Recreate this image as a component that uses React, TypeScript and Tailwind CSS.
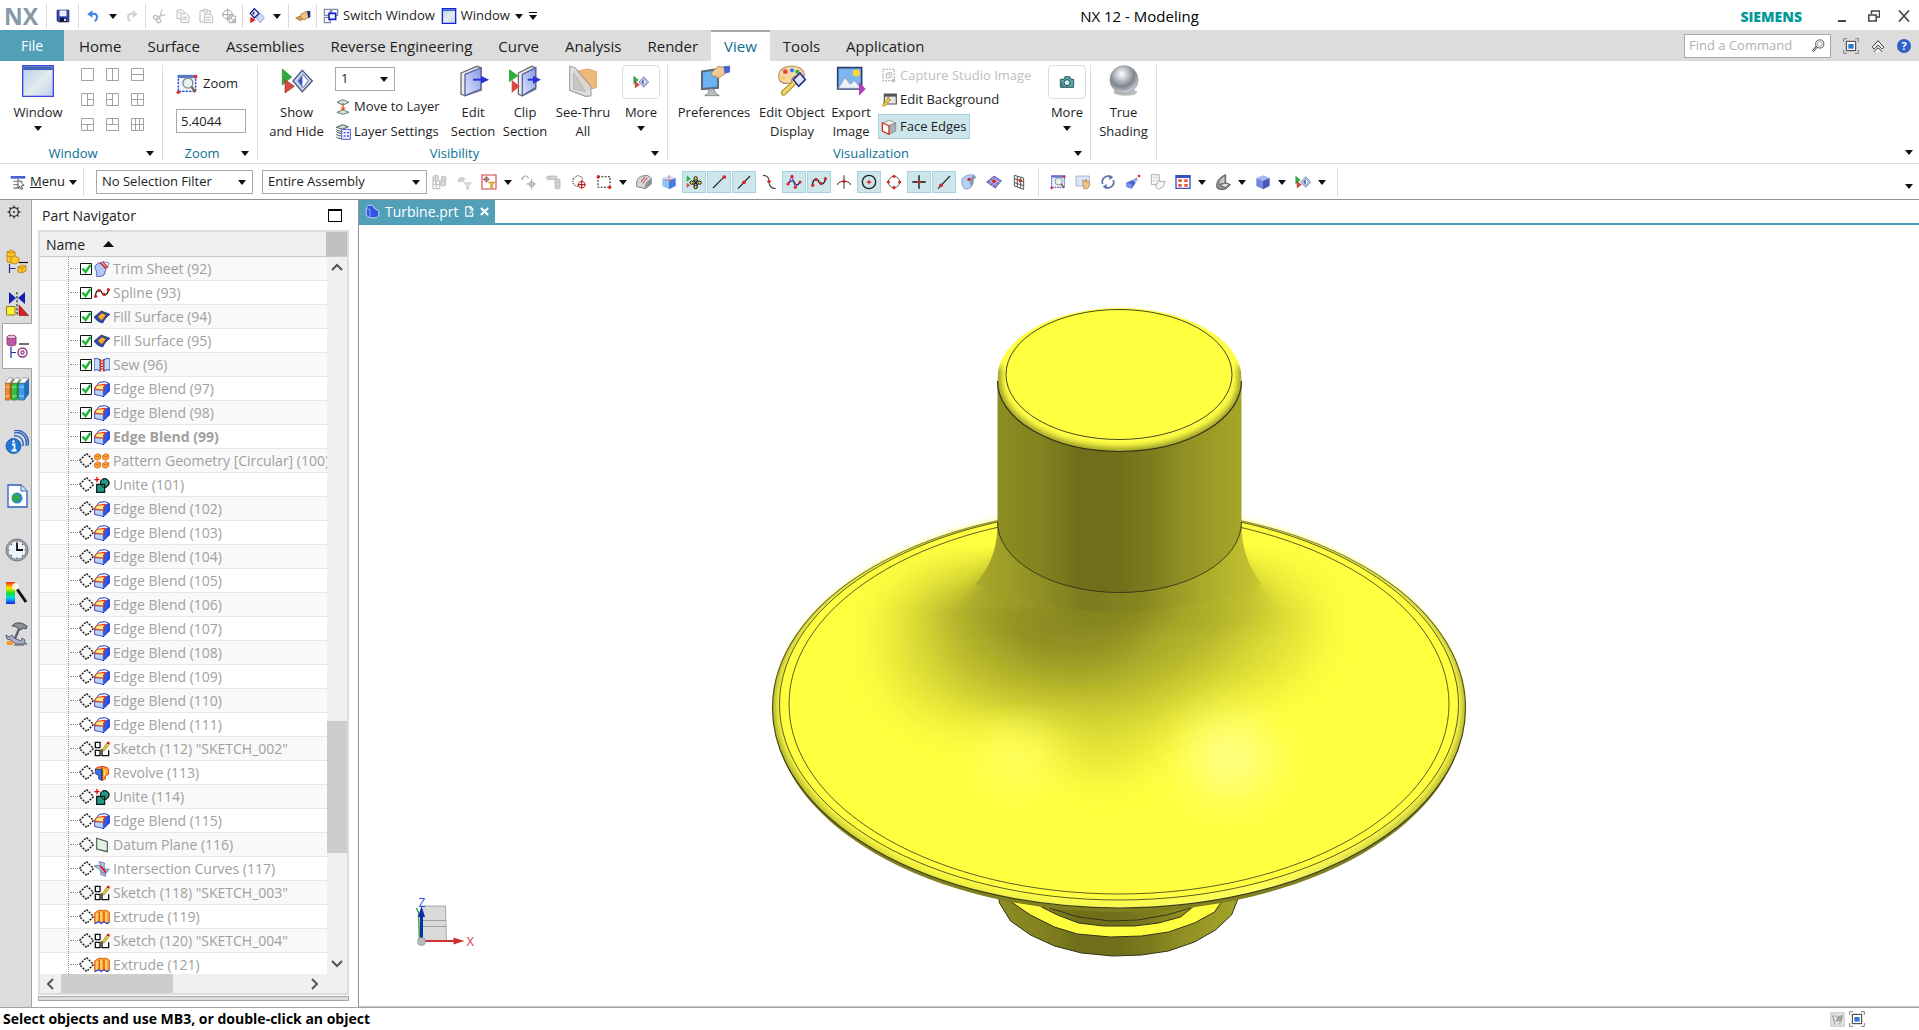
import { useState, type ReactNode } from 'react';

// All glyphs are drawn on a 24 x 24 grid
const glyphs: Record<string, ReactNode> = {
  save: (
    <>
      <path d="M2 2h20v20H4l-2-2z" fill="#3348b8" stroke="#15205c" strokeWidth="1.5" />
      <path d="M6 2.500h12v10H6z" fill="#e8eefc" />
      <path d="M7 15h11v7H7z" fill="#11152a" />
      <path d="M14 16.500h3v4h-3z" fill="#fff" />
    </>
  ),
  undo: (
    <>
      <path d="M15 21c5-4 6-13-2-13H8" fill="none" stroke="#3b84e0" strokeWidth="3.500" />
      <path d="M2 9l9-7v13z" fill="#3b84e0" />
    </>
  ),
  redo: (
    <>
      <path d="M9 21c-5-4-6-13 2-13h5" fill="none" stroke="#d2d2d2" strokeWidth="3.500" />
      <path d="M22 9l-9-7v13z" fill="#d2d2d2" />
    </>
  ),
  cut: (
    <g fill="none" stroke="#bdbdbd" strokeWidth="1.800">
      <path d="M15 2l-4 14M20 10L9 13" />
      <circle cx="5" cy="14" r="3" />
      <circle cx="10" cy="19" r="3" />
    </g>
  ),
  copy: (
    <g fill="#fafafa" stroke="#bdbdbd" strokeWidth="1.500">
      <path d="M3 3h8l3 3v10H3z" />
      <path d="M9 8h8l4 4v10H9z" />
      <path d="M11 14h7M11 17h7M5 7h4" />
    </g>
  ),
  paste: (
    <g fill="#fafafa" stroke="#bdbdbd" strokeWidth="1.500">
      <path d="M3 4h16v17H3z" />
      <path d="M8 2h6v4H8z" />
      <path d="M10 9h8l4 4v9H10z" />
      <path d="M12 14h7M12 18h7" />
    </g>
  ),
  target: (
    <g fill="none" stroke="#a8a8a8" strokeWidth="1.500">
      <circle cx="10" cy="10" r="7" />
      <path d="M10 1v18M1 10h18M12 12h10v10H12zM14 14l6 6m0-4v4h-4" />
    </g>
  ),
  hideShow: (
    <>
      <path d="M8 1l7 7-7 7-6-7z" fill="#eef" stroke="#1c2280" strokeWidth="2" />
      <path d="M8 4v7l-3-3z" fill="#1c2280" />
      <path d="M17 8l6 7-6 7-6-7z" fill="#cfdcf8" stroke="#8ea6dd" strokeWidth="1.500" />
      <path d="M2 13l8 5-8 5z" fill="#d8251f" />
    </>
  ),
  touch: (
    <>
      <path d="M1 15l9-4 4 4-6 4z" fill="#d49a52" stroke="#94602a" />
      <path d="M9 9l8-4 5 8-8 5-6-4z" fill="#f0c27e" stroke="#9a6a2c" />
      <path d="M18 4l5 1v9l-3 1z" fill="#1d2c78" />
    </>
  ),
  switchWin: (
    <g fill="#f4f7fd" strokeWidth="1.800">
      <path d="M2 2h9v9H2zM13 2h9v9h-9zM2 14h9v8H2z" stroke="#7d8aa6" />
      <path d="M9 8h10v9H9z" stroke="#1522d8" strokeWidth="2.400" />
    </g>
  ),
  windowPane: (
    <>
      <path d="M2 1h20v22H2z" fill="url(#paneFill)" stroke="#1522d8" strokeWidth="2" />
      <path d="M3 2h18v2.500H3z" fill="#3c5fc0" />
    </>
  ),
  bigWindow: (
    <>
      <path d="M.5.500h23v23H.5z" fill="url(#paneFill)" stroke="#3d46e0" />
      <path d="M1 1h22v2.800H1z" fill="#4463b8" />
    </>
  ),
  zoomBox: (
    <>
      <path d="M2.500 3h19v17h-19z" fill="#eef3fb" stroke="#1e3be0" strokeDasharray="2.500 1.200" strokeWidth="1.400" />
      <path d="M2 2h20v3.500H2z" fill="#5b77c8" />
      <circle cx="13" cy="11" r="5.500" fill="#e6f0ef" stroke="#7e8a90" strokeWidth="1.400" />
      <path d="M17 15l4 6" stroke="#8a6a30" strokeWidth="2.500" />
      <circle cx="2.500" cy="21" r="2" fill="#e03030" />
      <circle cx="21.500" cy="4" r="2" fill="#e03030" />
    </>
  ),
  showHide: (
    <>
      <path d="M1 3l7 6-7 6z" fill="#2fae3c" stroke="#1c7c28" strokeWidth=".5" />
      <path d="M3 11l7 5-7 5z" fill="#d84a40" stroke="#9c2a22" strokeWidth=".5" />
      <path d="M16 4l7.500 8-7.500 8-7-8z" fill="#c9d2ee" stroke="#4c5a84" strokeWidth="1" />
      <path d="M16.500 7l4 5-4 5-4-5z" fill="#f5f7fd" stroke="#5a6690" strokeWidth=".7" />
      <path d="M16 8v8l-3-4z" fill="#3b4cc8" />
    </>
  ),
  moveLayer: (
    <>
      <path d="M3 5l9-4 9 4-9 4z" fill="#cfe6da" stroke="#55655e" strokeWidth="1.300" />
      <path d="M3 20l9-4 9 4-9 3z" fill="#cfe6da" stroke="#55655e" strokeWidth="1.300" />
      <path d="M12 6v9" stroke="#e35a1c" strokeWidth="2" />
      <path d="M8 13l4 5 4-5z" fill="#e35a1c" />
    </>
  ),
  layerSettings: (
    <>
      <path d="M2 5l9-4 9 3-9 4zM2 11c0 2 5 3 8 3M2 15c0 2 5 3 8 3M2 19c0 2 5 3 8 3M2 8c0 2 5 3 8 3" fill="#bfe0cf" stroke="#4f5f58" strokeWidth="1.500" />
      <path d="M10 8h13v15H10z" fill="#eef0ff" stroke="#4c55d8" strokeWidth="1.500" />
      <path d="M13 13h3M13 18h3M18 13h3M18 18h3" stroke="#4c55d8" strokeWidth="2" />
    </>
  ),
  editSection: (
    <>
      <path d="M3 6l12-5 3 1v17L6 23l-3-1z" fill="#ececec" stroke="#6f6f6f" strokeWidth="1" />
      <path d="M6 7l12-5v16L6 23z" fill="url(#sectionFill)" stroke="#5a64a0" strokeWidth="1" />
      <path d="M12 11h7" stroke="#2a35d8" strokeWidth="1.500" />
      <path d="M18 8l6 3-6 3z" fill="#2a35d8" />
    </>
  ),
  clipSection: (
    <>
      <path d="M7 6l10-5 3 1v16L10 23l-3-1z" fill="#ececec" stroke="#6f6f6f" strokeWidth="1" />
      <path d="M10 7l10-5v15l-10 6z" fill="url(#sectionFill)" stroke="#5a64a0" strokeWidth="1" />
      <path d="M0 3l7 5-7 5z" fill="#2fae3c" />
      <path d="M2 11l6 5-6 5z" fill="#d84a40" />
      <path d="M14 11h5" stroke="#2a35d8" strokeWidth="1.500" />
      <path d="M18 8l6 3-6 3z" fill="#2a35d8" />
    </>
  ),
  seeThru: (
    <>
      <path d="M5 5l11-2 6 2v12l-8 2-9-5z" fill="#f0b878" stroke="#d09a60" strokeWidth=".6" />
      <path d="M2 1l4 1 12 14v7l-4 .500L2 19z" fill="#d9d9d9" fillOpacity=".85" stroke="#9d9d9d" strokeWidth=".8" />
      <path d="M5 6v12l9 2z" fill="#c6c6c6" stroke="#aaa" strokeWidth=".5" />
    </>
  ),
  preferences: (
    <>
      <path d="M3 5l12-2v14L3 18z" fill="#6ab4f6" stroke="#5c6c7c" strokeWidth="1.600" />
      <path d="M8 18h4l1 3 3 2H5l3-2z" fill="#b9bdbf" stroke="#7a8084" strokeWidth=".6" />
      <path d="M10 6l5-5 6 1v4l-6 4-2-2-2 1z" fill="#f0c896" stroke="#b98a52" strokeWidth=".7" />
      <path d="M19 1l5-.5v5l-4 1z" fill="#4a62d8" />
    </>
  ),
  objectDisplay: (
    <>
      <path d="M2 8c0-5 6-8 12-7s8 5 7 8-5 1-7 3-8 3-11 0c-1-1-1-2-1-4z" fill="#f4d9ae" stroke="#b88c58" strokeWidth=".8" />
      <circle cx="7" cy="5" r="1.800" fill="#e8452c" />
      <circle cx="12" cy="4" r="1.600" fill="#2f86d8" />
      <circle cx="16" cy="5" r="1.500" fill="#3aa648" />
      <circle cx="5.500" cy="9.500" r="1.500" fill="#f2d13a" />
      <path d="M16 13L7 22c-2 2-4-1-2-3l7-6c-1-3 1-5 4-5l-1 3 3 2z" fill="#f2d96a" stroke="#a88a2c" strokeWidth=".8" />
      <path d="M18 6l4 5-5 5-4-5z" fill="#dfe5fa" stroke="#24308c" strokeWidth="1.200" />
    </>
  ),
  exportImage: (
    <>
      <path d="M2 2h18v16H2z" fill="#7db5ee" stroke="#2c3d74" strokeWidth="1.200" />
      <circle cx="16" cy="6" r="2.600" fill="#ffd93a" />
      <path d="M2.500 17.500l5-8 4 5 3-3 5 6z" fill="#eef2f7" stroke="#8594ac" strokeWidth=".6" />
      <path d="M18 13l5 5-5 5z" fill="#b13cc0" />
    </>
  ),
  capture: (
    <g fill="none" stroke="#b9b9b9" strokeWidth="2">
      <path d="M3 2h17v17H3z" strokeDasharray="3 1.500" />
      <path d="M8 9l3-2h5v6l-3 2H8zM8 9h5v6" strokeWidth="1.500" />
      <path d="M17 15v8l5-4z" fill="#b9b9b9" stroke="none" />
    </g>
  ),
  editBackground: (
    <>
      <path d="M5 3h18v15H5z" fill="#e8e8e8" stroke="#555" strokeWidth="1.800" />
      <path d="M5 3h18v4H5z" fill="#555" />
      <path d="M14 12l-8 9c-2 2-5-1-3-3l6-5c-1-3 0-5 3-5v3l3 1z" fill="#f2d13a" stroke="#9a7a20" />
    </>
  ),
  faceEdges: (
    <>
      <path d="M2 6l11-4 9 4-10 4z" fill="#f2f2f2" stroke="#777" strokeWidth="1" />
      <path d="M12 10l10-4v12l-10 5z" fill="#aab0b8" stroke="#777" strokeWidth="1" />
      <path d="M2 6l10 4v13L2 18z" fill="#fff" stroke="#d8321f" strokeWidth="2" />
    </>
  ),
  camera: (
    <>
      <path d="M2 8h5l2-4h7l2 4h4v12H2z" fill="#5aa7a4" stroke="#2c5c62" strokeWidth="1.500" />
      <circle cx="12" cy="13" r="4.500" fill="#d6ecef" stroke="#264a50" strokeWidth="1.500" />
      <path d="M2 9v10l6 1z" fill="#3c7488" />
    </>
  ),
  sphere: (
    <>
      <ellipse cx="13" cy="20.500" rx="9" ry="2.500" fill="#bdbdbd" />
      <circle cx="12" cy="11" r="10.500" fill="url(#sphereFill)" stroke="#83898f" strokeWidth=".5" />
    </>
  ),
  menu: (
    <>
      <path d="M1 3h22v4H1z" fill="#4a5fd0" />
      <path d="M5 11h14M5 16h14M5 21h10" stroke="#8a8a8a" strokeWidth="2" />
      <path d="M12 8l9 9-4 .5 2 5-2 1-2.500-5L12 21z" fill="#fff" stroke="#333" strokeWidth="1.200" />
    </>
  ),
  grayTree: (
    <g fill="none" stroke="#c4c4c4" strokeWidth="1.800">
      <path d="M7 1v14M2 6h10M3 10h10v12H3zM3 16h10M8 10v12" />
      <circle cx="7" cy="6" r="4" />
      <circle cx="19" cy="7" r="3.500" fill="#d8d8d8" />
      <circle cx="18" cy="14" r="4" fill="#d8d8d8" />
    </g>
  ),
  grayFilter: (
    <>
      <path d="M3 9l3-4 7 1-1 5-8 1z" fill="#d0d0d0" stroke="#c4c4c4" />
      <path d="M12 13h11l-4 5v5h-3v-5z" fill="#dcdcdc" stroke="#c4c4c4" />
    </>
  ),
  redFilter: (
    <>
      <path d="M1.500 1.500h21v21h-21z" fill="#fff" stroke="#d03a3e" strokeWidth="1.600" />
      <circle cx="8" cy="8" r="3" fill="none" stroke="#555" strokeWidth="1.200" />
      <path d="M8 3v10M3 8h10" stroke="#b03030" strokeWidth="1.200" />
      <path d="M11 12h10l-3.500 4v5h-3v-5z" fill="#f2b53a" stroke="#b8811c" strokeWidth=".8" />
    </>
  ),
  grayMove: (
    <g fill="none" stroke="#a9a9a9" strokeWidth="1.600">
      <path d="M2 8c1-6 8-7 9-1M2 9l-1-4M16 7v16M8 15h15" />
      <circle cx="16" cy="15" r="3.500" />
    </g>
  ),
  grayShare: (
    <g fill="#d4d4d4" stroke="#b5b5b5" strokeWidth="1.200">
      <circle cx="4" cy="6" r="3" />
      <path d="M6 3h10v5H6zM13 8h8v14h-7z" />
      <path d="M14 13h7M14 18h7" />
    </g>
  ),
  dottedPoint: (
    <>
      <path d="M3 7l7-5 7 3v9l-8 5-6-4z" fill="none" stroke="#222" strokeDasharray="1.500 1.500" strokeWidth="1.500" />
      <circle cx="16" cy="16" r="5" fill="#fff" stroke="#d8251f" strokeWidth="1.500" />
      <path d="M16 10v12M10 16h12" stroke="#8a1410" strokeWidth="1.500" />
    </>
  ),
  rectSelect: (
    <>
      <path d="M3 4h18v16H3z" fill="none" stroke="#222" strokeDasharray="3 2" strokeWidth="1.600" />
      <circle cx="3.500" cy="4" r="2.500" fill="#d8251f" />
      <circle cx="20.500" cy="20" r="2.500" fill="#d8251f" />
    </>
  ),
  grayBlend: (
    <>
      <path d="M1 12c1-5 4-8 8-9l8-1 6 4v9l-9 7-13-3z" fill="#d4d8dc" stroke="#6c7076" strokeWidth="1.200" />
      <path d="M13 21c0-6 3-11 10-14v8l-9 7z" fill="#8e949c" />
      <path d="M8 12c1-4 3-6 6-7M11 14c1-4 3-6 6-8" fill="none" stroke="#d83a34" strokeWidth="1.500" />
    </>
  ),
  blueCube: (
    <>
      <path d="M2 6l10-4 10 4-10 4z" fill="#cfe2fa" />
      <path d="M2 6l10 4v13L2 18z" fill="#8fc4f2" />
      <path d="M12 10l10-4v12l-10 5z" fill="#4b78dd" />
      <path d="M12 2v8M6 8l6 2 5-2" stroke="#d8453c" strokeWidth="1" fill="none" />
    </>
  ),
  snapAll: (
    <>
      <path d="M1 2l6 5-6 5z" fill="#2fae3c" />
      <path d="M1 13l5 4-5 4z" fill="#d84a40" />
      <g fill="#f6dc3a" stroke="#111" strokeWidth="1.500">
        <circle cx="14.500" cy="6.500" r="2.500" />
        <circle cx="14.500" cy="19.500" r="2.500" />
        <circle cx="8.500" cy="13" r="2.500" />
        <circle cx="20.500" cy="13" r="2.500" />
      </g>
      <path d="M11 9l7 8m0-8l-7 8" stroke="#111" strokeWidth="1.800" />
    </>
  ),
  endPoint: (
    <>
      <path d="M3 21L20 4" stroke="#222" strokeWidth="1.700" />
      <circle cx="20" cy="4.500" r="2.800" fill="#d8251f" />
    </>
  ),
  midPoint: (
    <>
      <path d="M3 22L21 3" stroke="#222" strokeWidth="1.700" />
      <circle cx="12" cy="12.500" r="2.800" fill="#d8251f" />
    </>
  ),
  arcPoint: (
    <>
      <path d="M3 2c7 0 9 4 9 9s2 11 10 11" fill="none" stroke="#444" strokeWidth="1.700" />
      <circle cx="12" cy="11" r="2.500" fill="#d8251f" />
    </>
  ),
  polePoint: (
    <>
      <path d="M3 15L9 3l5 17 7-8" fill="none" stroke="#9a35c4" strokeWidth="1.600" />
      <path d="M3 15c5-6 8-6 10-2s4 5 8 0" fill="none" stroke="#223" strokeWidth="1.600" />
      <g fill="#d8251f">
        <circle cx="3" cy="15" r="2.300" />
        <circle cx="9" cy="3.500" r="2.300" />
        <circle cx="14" cy="20" r="2.300" />
        <circle cx="21" cy="12" r="2.300" />
      </g>
    </>
  ),
  spline: (
    <>
      <path d="M2 18C3 4 10 7 12 12s8 4 10-5" fill="none" stroke="#222" strokeWidth="2" />
      <g fill="#d8251f">
        <circle cx="2.500" cy="17" r="2.400" />
        <circle cx="8" cy="8.500" r="2.400" />
        <circle cx="15" cy="14" r="2.400" />
        <circle cx="21.500" cy="7" r="2.400" />
      </g>
    </>
  ),
  crossPoint: (
    <>
      <path d="M12 2v20M2 16c3-7 17-7 20 0" fill="none" stroke="#444" strokeWidth="1.600" />
      <circle cx="12" cy="11" r="2.600" fill="#d8251f" />
    </>
  ),
  arcCenter: (
    <>
      <circle cx="12" cy="12" r="10" fill="none" stroke="#222" strokeWidth="2" />
      <circle cx="12" cy="12" r="2.400" fill="#d8251f" />
      <path d="M12 8v8M8 12h8" stroke="#d8251f" strokeWidth="1" />
    </>
  ),
  quadrant: (
    <>
      <circle cx="12" cy="12" r="8.500" fill="none" stroke="#666" strokeWidth="1.500" />
      <g fill="#d8251f">
        <circle cx="12" cy="3.500" r="2.400" />
        <circle cx="12" cy="20.500" r="2.400" />
        <circle cx="3.500" cy="12" r="2.400" />
        <circle cx="20.500" cy="12" r="2.400" />
      </g>
    </>
  ),
  existing: (
    <>
      <path d="M12 2v20M2 12h20" stroke="#111" strokeWidth="2" />
      <circle cx="12" cy="12" r="2.400" fill="#d8251f" />
    </>
  ),
  onCurve: (
    <>
      <path d="M3 22L21 3" stroke="#222" strokeWidth="1.700" />
      <circle cx="7.500" cy="17" r="2.800" fill="#d8251f" />
    </>
  ),
  onFace: (
    <>
      <path d="M2 7c5-5 11-7 18-5-6 3-7 7-6 12l2 5c-4 3-8 4-11 3-3-5-5-10-3-15z" fill="#b5d2f5" stroke="#6f8fbd" strokeWidth="1.200" />
      <path d="M20 2l3 3c-3 2-5 5-4 9l-3 5c-4-7-3-13 4-17z" fill="#8797b0" />
      <circle cx="12" cy="8" r="2.500" fill="#d8251f" />
    </>
  ),
  facet: (
    <>
      <path d="M1 12L12 3l11 7-9 11z" fill="#7f7fd0" stroke="#4a4a86" strokeWidth="1.200" />
      <path d="M5 9l12 8M9 6l12 7M5 15l11-9M9 18l11-10" stroke="#d9d9f5" strokeWidth="1" />
      <circle cx="12" cy="11" r="2.600" fill="#d8251f" />
    </>
  ),
  gridPoint: (
    <>
      <path d="M5 2l14 4v17L5 18zM5 7l14 4.500M5 13l14 4.500M9.500 3.500v16M14.500 5v16.500" fill="none" stroke="#555" strokeWidth="1.500" />
      <circle cx="14" cy="10" r="2.400" fill="#d8251f" />
    </>
  ),
  panView: (
    <>
      <path d="M1.500 3h20v15h-20z" fill="#dbe6f6" stroke="#8b9cc0" />
      <path d="M12 14l-1-4 2-1 2 3 1-4 2 1v3l3-1 1 6-3 5h-6z" fill="#efc389" stroke="#ab7b3f" />
    </>
  ),
  rotateView: (
    <>
      <path d="M4 15A8.500 8.500 0 0116 4.500M20 9A8.500 8.500 0 018 19.500" fill="none" stroke="#5a72a6" strokeWidth="2.600" />
      <path d="M14 1l6 4-6 4zM10 15l-6 4 6 4z" fill="#5a72a6" />
    </>
  ),
  perspective: (
    <>
      <path d="M2 13l9-4 5 4-6 9-8-3z" fill="#4a5fd0" />
      <path d="M2 13l8 2v7l-8-3z" fill="#7d90ea" />
      <path d="M11 9l7-4 1 3-3 5z" fill="#93a3e8" />
      <circle cx="21" cy="3" r="2" fill="#d8251f" />
    </>
  ),
  grayView: (
    <g fill="#f5f5f5" stroke="#b0b0b0" strokeWidth="1.500">
      <path d="M2 1h12v15H2zM5 5h2M9 5h2M5 10h2M9 10h2" />
      <path d="M9 15l5-4h9l-3 8-7 4-4-3z" />
    </g>
  ),
  layoutRed: (
    <>
      <path d="M1.500 2.500h21v19h-21z" fill="#fff" stroke="#3a52c0" strokeWidth="2" />
      <path d="M1 2h22v4H1z" fill="#3a52c0" />
      <path d="M5 8h5v4H5zM14 8h5v4h-5zM5 15h5v4H5zM14 15h5v4h-5z" fill="#e8532c" />
    </>
  ),
  renderStyle: (
    <>
      <path d="M3 21C1 12 6 5 16 1v12l7 3-6 6c-5 2-10 2-14-1z" fill="#8f8f8f" stroke="#4c4c4c" strokeWidth="1.300" />
      <path d="M6 14c1-4 4-8 8-10v9z" fill="#c9c9c9" />
      <path d="M7 16l9-2 6 2-7 4z" fill="#e8e8e8" stroke="#4c4c4c" />
    </>
  ),
  solidCube: (
    <>
      <path d="M2 6l11-4 9 4-10 4z" fill="#a8b6f2" />
      <path d="M2 6l10 4v13L2 18z" fill="#7387e2" />
      <path d="M12 10l10-4v12l-10 5z" fill="#4a5ab8" />
    </>
  ),
  search: (
    <>
      <circle cx="15" cy="8.500" r="7" fill="#fff" stroke="#444" strokeWidth="1.500" />
      <circle cx="15" cy="8.500" r="4" fill="none" stroke="#666" strokeWidth="1" />
      <path d="M10 13l-7 8" stroke="#444" strokeWidth="4" />
      <path d="M10 13l-7 8" stroke="#fff" strokeWidth="1.500" />
    </>
  ),
  fullScreen: (
    <>
      <path d="M1 6V1h5M18 1h5v5M23 18v5h-5M6 23H1v-5" fill="none" stroke="#7d7d7d" strokeWidth="1.500" />
      <path d="M5 5h14v14H5z" fill="#fff" stroke="#333" strokeWidth="1.500" />
      <path d="M8 9h8v7H8z" fill="#2f78d0" />
    </>
  ),
  collapse: <path d="M2 14L12 3l10 11-3 3-7-7-7 7zm3 8l7-7 7 7" fill="#fff" stroke="#333" strokeWidth="1.700" />,
  flag: (
    <>
      <path d="M.5.500h23v23H.5z" fill="#dedede" stroke="#bcbcbc" />
      <path d="M4 6l4 14M20 5l-5 15" stroke="#999" strokeWidth="1.500" />
      <path d="M5 6l7 2 1 6-6-1z" fill="#eee" stroke="#999" />
      <path d="M19 6l-7 2-1 6 7-1z" fill="#aaa" stroke="#888" strokeDasharray="2 2" strokeWidth="2" />
    </>
  ),
  gear: (
    <>
      <circle cx="12" cy="12" r="7.500" fill="none" stroke="#333" strokeWidth="2.200" />
      <path d="M12 1v4M12 19v4M1 12h4M19 12h4M4.200 4.200l2.600 2.600M17.200 17.200l2.600 2.600M19.800 4.200l-2.600 2.600M6.800 17.200l-2.600 2.600" stroke="#333" strokeWidth="2.200" />
      <circle cx="12" cy="12" r="1.800" fill="#333" />
    </>
  ),
  assemblyNav: (
    <>
      <path d="M2 3l4-2 4 2v4l4 2v4l-4 2-4-1-4-1z" fill="#fbc62c" stroke="#b97e10" strokeWidth=".8" />
      <path d="M2 7l4 1 4-1M6 8v6M2 3l4 1 4-1" fill="none" stroke="#b97e10" strokeWidth=".8" />
      <path d="M14 13.500h9" stroke="#111" strokeWidth="1.200" />
      <path d="M4.500 15v9M4.500 19.500h6" stroke="#1c2a9c" strokeWidth="1.200" />
      <path d="M13 18l4-2 4 1v5l-4 2-4-1z" fill="#fbc62c" stroke="#b97e10" strokeWidth=".8" />
      <path d="M13 18l4 1 4-2M17 19v5" fill="none" stroke="#b97e10" strokeWidth=".8" />
    </>
  ),
  constraintNav: (
    <>
      <path d="M4 0l7 6-7 6zM20 0l-7 6 7 6z" fill="#1420b8" />
      <path d="M12 0v24" stroke="#111" strokeDasharray="2.500 1.500" />
      <path d="M1.500 14.500h8.500v8.500H1.500z" fill="#fbef3a" stroke="#8b8414" />
      <path d="M14 13v10.500h9.500z" fill="#d42020" stroke="#7c1010" strokeWidth=".6" />
    </>
  ),
  partNav: (
    <>
      <path d="M1 3v7c0 2.500 9 2.500 9 0V3z" fill="#c05aa4" stroke="#7c2c68" strokeWidth=".8" />
      <ellipse cx="5.500" cy="3" rx="4.500" ry="1.800" fill="#ecc4e0" stroke="#7c2c68" strokeWidth=".8" />
      <path d="M13 10h10" stroke="#111" strokeWidth="1.200" />
      <path d="M5 13v11M5 18.500h5" stroke="#1c2a9c" strokeWidth="1.200" />
      <circle cx="16.500" cy="18.500" r="4.500" fill="#fff" stroke="#8c3478" strokeWidth="1.400" />
      <circle cx="16.500" cy="18.500" r="1.600" fill="none" stroke="#8c3478" strokeWidth="1.200" />
    </>
  ),
  library: (
    <>
      <path d="M0 6l5-5h19v16l-5 6H0z" fill="#f2f2f2" />
      <path d="M0 6h5v17H0z" fill="#f08a2a" stroke="#9c5010" strokeWidth=".7" />
      <path d="M6.500 6h5.500v17H6.500z" fill="#35c046" stroke="#177326" strokeWidth=".7" />
      <path d="M5 6l4-5v5l-2.500 2v14H5z" fill="#a35a16" />
      <path d="M13.500 6h6v17h-6z" fill="#3a9be6" stroke="#175a96" strokeWidth=".7" />
      <path d="M12 6l4-4v4l-2.500 2v14H12z" fill="#1f8a30" />
      <path d="M19.500 6L24 1v16l-4.500 6z" fill="#1e6fb8" />
      <path d="M0 6l4-5h4L5 6zM6.500 6l4.500-5h4l-3 5zM13.500 6L18 1h6l-4.500 5z" fill="#fff" stroke="#777" strokeWidth=".6" />
      <path d="M0 10h5M0 19h5M7 10h5M7 19h5M14 10h5M14 19h5" stroke="#fff" strokeOpacity=".7" strokeWidth=".8" />
    </>
  ),
  info: (
    <>
      <path d="M9 6c6-1 10 4 9 10M9 3c8-2 14 5 12 13M9 .500c9-1.500 16 6 14 15" fill="none" stroke="#2f68c0" strokeWidth="1.500" />
      <circle cx="8.500" cy="16" r="7.500" fill="#1f78d8" stroke="#134d94" strokeWidth=".8" />
      <path d="M7 14.500h2.500v5.500M6.500 20.500h5" fill="none" stroke="#fff" strokeWidth="1.800" />
      <circle cx="8.500" cy="11.500" r="1.300" fill="#fff" />
    </>
  ),
  webDoc: (
    <>
      <path d="M3 1h13l6 6v16H3z" fill="#fff" stroke="#2d62b8" strokeWidth="1.300" />
      <path d="M16 1v6h6" fill="#d6e4f8" stroke="#2d62b8" strokeWidth="1" />
      <circle cx="12" cy="14" r="5.500" fill="#2f86d8" />
      <path d="M8 11c3-3 4 1 6 0s2 4 0 5-2 3-4 2-4-4-2-7z" fill="#36a648" />
    </>
  ),
  clock: (
    <>
      <circle cx="12" cy="12" r="11" fill="#a2a7ad" stroke="#74787d" />
      <circle cx="12" cy="12" r="9" fill="#eef4fc" stroke="#7d8186" strokeWidth=".6" />
      <path d="M12 5v7h6" fill="none" stroke="#111" strokeWidth="1.800" />
      <path d="M12 3.500v1.200M12 19.500v1.200M3.500 12h1.200M19.500 12h1.200M6 6l.8.8M17.200 17.200l.8.8M6 18l.8-.8M17.200 6.800L18 6" stroke="#345" strokeWidth="1.200" />
    </>
  ),
  palette: (
    <>
      <path d="M1 1h9v22H1z" fill="url(#rainbow)" />
      <path d="M12 8l9 13" stroke="#111" strokeWidth="3" />
      <circle cx="10.500" cy="5.500" r="3.500" fill="#fff" fillOpacity=".75" />
    </>
  ),
  tools: (
    <>
      <path d="M7 4c3-4 9-4 13-1l2 1-1 3-3-1-2 2-3-2c-2-1-3-2-6-2z" fill="#8d9398" stroke="#3c4044" strokeWidth=".9" />
      <path d="M14 7L9 19" stroke="#5c6166" strokeWidth="2.400" />
      <path d="M1 13l3 2 3-2 2 3 7 3 1-3 3 2-1 2 3 2H11l-5-4-4-1z" fill="#aab0cc" stroke="#4c5270" strokeWidth=".9" />
      <path d="M2 19h6v4H2z" fill="#f59a2c" />
      <path d="M9 23h10" stroke="#555" strokeWidth="1" />
    </>
  ),
  trimSheet: (
    <>
      <path d="M1 9C3 5 6 3 9 3l11 3c-3 4-2 9-5 15-3 2-8 3-11 2 1-6-1-9-3-14z" fill="#b4c5f7" stroke="#3c55a8" strokeWidth="1.300" />
      <path d="M11 3l8 7 4-7-9-2z" fill="#fff" stroke="#3c55a8" />
      <path d="M9 2l9 10M13 1l8 9" stroke="#d8251f" strokeWidth="2" />
    </>
  ),
  fillSurface: (
    <>
      <path d="M0 12C4 9 8 5 11 3l13 5c-4 3-8 7-11 13-5-1-10-4-13-9z" fill="#3348b8" stroke="#15205c" />
      <path d="M6 11l6-5 6 3-6 8c-3-1-5-3-6-6z" fill="#f5b32c" stroke="#7c4c08" />
    </>
  ),
  sew: (
    <>
      <path d="M0 3l4-1 5 2v17l-5-2-4 1zM24 3l-4-1-5 2v17l5-2 4 1z" fill="#c4dafa" stroke="#244fa8" strokeWidth="1.500" />
      <path d="M9 4h6v18H9z" fill="#fff" />
      <path d="M10 3v19M14 3v19M10 6h4M10 10h4M10 14h4M10 18h4" stroke="#c21818" strokeWidth="1.500" />
    </>
  ),
  edgeBlend: (
    <>
      <path d="M1 11L8 2l9-1 6 3v11l-8 8L1 20z" fill="#fff" stroke="#1a34c8" strokeWidth="1.500" />
      <path d="M14 23l8.500-8V4c-6 1-8.500 5-8.500 10z" fill="#2f55ee" stroke="#15209c" strokeWidth=".8" />
      <path d="M1 13v7l13 3v-9z" fill="#bcd4fa" stroke="#1a34c8" strokeWidth=".8" />
      <path d="M1.500 12C2 8 5 6 8 6l10-1c-3 2-4 5-4 9z" fill="#ffe88a" stroke="#e0401c" strokeWidth="1.800" />
    </>
  ),
  pattern: (
    <g fill="#fba62c" stroke="#e0601c" strokeWidth="1.200">
      <path d="M1 4l4-3 5 2v5l-4 3-5-2zM13 4l4-3 5 2v5l-4 3-5-2zM1 16l4-3 5 2v5l-4 3-5-2zM13 16l4-3 5 2v5l-4 3-5-2z" />
      <path d="M1 4l5 2 4-3M13 4l5 2 4-3M1 16l5 2 4-3M13 16l5 2 4-3" fill="none" />
    </g>
  ),
  unite: (
    <>
      <circle cx="16" cy="9" r="6.500" fill="#1f9c84" stroke="#111" strokeWidth="1.500" />
      <path d="M4 11h12v12H4z" fill="#1f9c84" stroke="#111" strokeWidth="1.800" />
      <circle cx="16" cy="9" r="6.500" fill="none" stroke="#111" strokeWidth="1.300" />
      <path d="M4.500 0v8M.5 4h8" stroke="#d81010" strokeWidth="2" />
    </>
  ),
  sketch: (
    <>
      <path d="M2 2h7v8H2zM2 14h7v8H2zM12 12v10h10v-8" fill="none" stroke="#111" strokeWidth="2" />
      <path d="M12 14l8-12 3 2-8 11z" fill="#f7dc3a" stroke="#7c5c08" />
      <path d="M20 2l3 2" stroke="#d81010" strokeWidth="3" />
    </>
  ),
  revolve: (
    <>
      <path d="M2 6c4-5 16-5 20 0v8l-5 2v5l-5 2z" fill="#fba62c" stroke="#d8301c" strokeWidth="1.400" />
      <path d="M2 6l10 1v16l-5-2v-5l-5-3z" fill="#3a70e8" stroke="#15205c" />
      <path d="M12 4v19" stroke="#111" strokeDasharray="2 1.500" strokeWidth="1.500" />
      <path d="M16 8v8" stroke="#ffe08a" strokeWidth="2.500" />
    </>
  ),
  datumPlane: <path d="M4 2l16 5v15L4 18z" fill="#e3efe3" stroke="#4c5c4c" strokeWidth="1.700" />,
  intersect: (
    <>
      <path d="M8 1l8 2c-2 6 0 10 2 13l-1 7-7-3c1-6 0-12-2-19z" fill="#b4c6ec" stroke="#3c558c" />
      <path d="M0 8c4-2 8-2 11 1s7 4 12 3l-5 6c-4 1-7-1-9-4S4 9 0 8z" fill="#9fb4e6" fillOpacity=".8" stroke="#3c558c" />
      <path d="M9 7l9 10" stroke="#e02020" strokeWidth="2.600" />
    </>
  ),
  extrude: (
    <>
      <path d="M1 6l6-4h12l4 3v15l-4 2-4-3-4 2-4-2-6 2z" fill="#fba62c" stroke="#d8501c" strokeWidth="1.400" />
      <path d="M8 4v15M15 4v14" stroke="#d8501c" strokeWidth="1.600" />
      <path d="M10.500 5v14M4.500 6v14M18 5v14" stroke="#ffe08a" strokeWidth="2" />
      <path d="M1 22l6-3 4 3 4-3 4 3 4-2" fill="none" stroke="#1f3be8" strokeWidth="1.600" />
    </>
  ),
  partFile: (
    <>
      <path d="M2 6l4-4h6l3 5 7 4v8l-4 3H8l-6-4z" fill="#2f55e0" stroke="#cfe0fa" strokeWidth="1.400" />
      <path d="M2 7l6 2v11" fill="none" stroke="#9fb6fa" strokeWidth="1.400" />
    </>
  ),
  modified: (
    <>
      <path d="M19 14v8H4V2h11l4 4v2M14 2v5h5" fill="none" stroke="#fff" strokeWidth="2.400" />
      <path d="M12 16l9-8" stroke="#fff" strokeWidth="2.400" />
    </>
  ),
};

function Glyph({ name, className = 'size-4' }: { name: string; className?: string }) {
  return (
    <svg viewBox="0 0 24 24" className={`shrink-0 ${className}`} aria-hidden="true">
      {glyphs[name]}
    </svg>
  );
}

function Arrow({ className = '' }: { className?: string }) {
  return (
    <svg viewBox="0 0 8 5" className={`h-[5px] w-2 shrink-0 ${className}`} aria-hidden="true">
      <path d="M0 0h8L4 5z" fill="#111" />
    </svg>
  );
}

function GlyphDefs() {
  return (
    <svg width="0" height="0" className="absolute" aria-hidden="true">
      <defs>
        <linearGradient id="paneFill" x1="0" y1="0" x2="1" y2="1">
          <stop offset="0" stopColor="#b4cdf2" />
          <stop offset=".55" stopColor="#e3ecec" />
          <stop offset="1" stopColor="#bccfee" />
        </linearGradient>
        <linearGradient id="sectionFill" x1="0" y1="1" x2="1" y2="0">
          <stop offset="0" stopColor="#dfe5fb" />
          <stop offset="1" stopColor="#8698e4" />
        </linearGradient>
        <radialGradient id="sphereFill" cx=".42" cy=".3" r=".75">
          <stop offset="0" stopColor="#ffffff" />
          <stop offset=".25" stopColor="#c9ced3" />
          <stop offset=".6" stopColor="#7d848b" />
          <stop offset="1" stopColor="#e3e8ec" />
        </radialGradient>
        <linearGradient id="rainbow" x1="0" y1="0" x2="0" y2="1">
          <stop offset="0" stopColor="#ff2a10" />
          <stop offset=".28" stopColor="#ffe600" />
          <stop offset=".5" stopColor="#18e028" />
          <stop offset=".72" stopColor="#00d8e8" />
          <stop offset="1" stopColor="#1b20e8" />
        </linearGradient>
      </defs>
    </svg>
  );
}

function TitleBar() {
  const sep = 'h-6 w-px shrink-0 bg-[#dcdcdc]';
  return (
    <header className="grid h-[30px] shrink-0 grid-cols-[3fr_auto_2fr] items-center text-[13px]">
      <div className="flex items-center whitespace-nowrap">
        <span className="w-[46px] pl-1 text-[23px] leading-[32px] font-bold text-[#8599a8]">NX</span>
        <span className={sep} />
        <button aria-label="Save" className="flex w-[31px] justify-center"><Glyph name="save" className="size-[14px]" /></button>
        <span className={sep} />
        <button aria-label="Undo" className="flex w-7 justify-center"><Glyph name="undo" className="size-[14px]" /></button>
        <button aria-label="Undo list" className="flex w-3 justify-center"><Arrow /></button>
        <button aria-label="Redo" className="flex w-[26px] justify-center"><Glyph name="redo" className="size-[14px]" /></button>
        <span className={sep} />
        <button aria-label="Cut" className="ml-[2px] flex w-[23px] justify-center"><Glyph name="cut" /></button>
        <button aria-label="Copy" className="flex w-[23px] justify-center"><Glyph name="copy" /></button>
        <button aria-label="Paste" className="flex w-[23px] justify-center"><Glyph name="paste" /></button>
        <button aria-label="Repeat" className="mr-[2px] flex w-[23px] justify-center"><Glyph name="target" /></button>
        <span className={sep} />
        <button aria-label="Show and Hide" className="flex w-[27px] justify-center"><Glyph name="hideShow" /></button>
        <button aria-label="Show and Hide list" className="flex w-[14px] justify-center"><Arrow /></button>
        <span className={`${sep} ml-1`} />
        <button aria-label="Touch mode" className="flex w-[27px] justify-center"><Glyph name="touch" /></button>
        <span className={`${sep} mr-[6px]`} />
        <button className="flex items-center gap-1"><Glyph name="switchWin" />Switch Window</button>
        <button className="ml-[6px] flex items-center gap-1"><Glyph name="windowPane" />Window<Arrow className="ml-px" /></button>
        <button aria-label="Customize" className="ml-[6px] flex flex-col items-center gap-[2px]">
          <span className="h-px w-2 bg-black" />
          <Arrow />
        </button>
      </div>
      <h1 className="text-[15px] text-black">NX 12 - Modeling</h1>
      <div className="flex items-center justify-end pr-[9px]">
        <span className="mr-9 text-[14px] font-extrabold text-[#00999a]">SIEMENS</span>
        <button aria-label="Minimize" className="mr-[22px] h-3 w-2 border-b-2 border-[#444]" />
        <button aria-label="Restore" className="mr-[18px]">
          <svg viewBox="0 0 12 12" className="size-3" fill="none" stroke="#444" strokeWidth="1.500">
            <path d="M3.500 4V1h8v6h-3M.8 5h7.400v6H.8z" />
          </svg>
        </button>
        <button aria-label="Close">
          <svg viewBox="0 0 12 12" className="size-3" stroke="#444" strokeWidth="1.700">
            <path d="M1 .500l10 11M11 .500l-10 11" />
          </svg>
        </button>
      </div>
    </header>
  );
}

const tabs = ['Home', 'Surface', 'Assemblies', 'Reverse Engineering', 'Curve', 'Analysis', 'Render', 'View', 'Tools', 'Application'];

function TabBar() {
  const [active, setActive] = useState('View');
  return (
    <nav className="flex h-[31px] shrink-0 bg-[#dcdcdc] text-[15px] whitespace-nowrap">
      <button className="w-16 bg-[#52a0b8] text-[14px] text-white">File</button>
      <div className="flex pl-[2px]">
        {tabs.map((t) => (
          <button
            key={t}
            onClick={() => setActive(t)}
            className={t === active ? 'border-t-2 border-[#a8a8a8] bg-white px-[13px] text-[#0a6f94]' : 'border-t-2 border-transparent px-[13px]'}
          >
            {t}
          </button>
        ))}
      </div>
      <div className="ml-auto flex items-center gap-3 pr-2">
        <label className="flex h-6 w-[147px] items-center border border-[#a8a8a8] bg-white pr-1 pl-1">
          <input aria-label="Find a Command" placeholder="Find a Command" className="w-[122px] text-[13px] placeholder:text-[#b0b0b0] focus:outline-none" />
          <Glyph name="search" className="size-[14px]" />
        </label>
        <button aria-label="Full screen"><Glyph name="fullScreen" /></button>
        <button aria-label="Minimize ribbon"><Glyph name="collapse" className="size-[14px]" /></button>
        <button aria-label="Help" className="size-[14px] rounded-full bg-[#2f5fc8] text-[11px] leading-[14px] font-bold text-white">?</button>
      </div>
    </nav>
  );
}

function BigButton({ icon, lines, width, drop }: { icon: string; lines: string[]; width: string; drop?: boolean }) {
  return (
    <button className={`flex shrink-0 flex-col items-center ${width}`}>
      <Glyph name={icon} className="mb-[6px] size-8" />
      {lines.map((l) => <span key={l} className="leading-[19px] whitespace-nowrap">{l}</span>)}
      {drop && <Arrow className="mt-1" />}
    </button>
  );
}

function MoreButton({ icon, width }: { icon: string; width: string }) {
  return (
    <button className={`flex shrink-0 flex-col items-center ${width}`}>
      <span className="mb-1 grid h-[34px] w-[38px] place-items-center rounded-sm border border-[#dcdcdc]">
        <Glyph name={icon} />
      </span>
      <span className="leading-[19px]">More</span>
      <Arrow className="mt-1" />
    </button>
  );
}

function Group({ label, width, children, drop = true }: { label?: string; width: string; children: ReactNode; drop?: boolean }) {
  return (
    <section className={`mt-1 mb-[3px] flex shrink-0 flex-col border-r border-[#dcdcdc] ${width}`}>
      <div className="flex flex-1">{children}</div>
      <div className="flex h-[14px] items-center leading-[14px]">
        <span className="flex-1 text-center text-[#0a6f94]">{label}</span>
        {label && drop && <button aria-label={`${label} options`} className="pr-2"><Arrow /></button>}
      </div>
    </section>
  );
}

const layouts = [
  'M.5.500h12v12H.5z',
  'M.5.500h12v12H.5zM6.500.500v12',
  'M.5.500h12v12H.5zM.5 6.500h12',
  'M.5.500h12v12H.5zM6.500.500v12M6.500 6.500h6',
  'M.5.500h12v12H.5zM6.500.500v12M.5 6.500h6',
  'M.5.500h12v12H.5zM6.500.500v12M.5 6.500h12',
  'M.5.500h12v12H.5zM.5 6.500h12M6.500 6.500v6',
  'M.5.500h12v12H.5zM.5 6.500h12M6.500.500v6',
  'M.5.500h12v12H.5zM4.500.500v12M8.500.500v12M.5 6.500h12',
];

function Picker({ label, options, className }: { label: string; options: string[]; className: string }) {
  return (
    <span className={`relative inline-flex items-center ${className}`}>
      <select aria-label={label} className="size-full appearance-none border border-[#a8a8a8] bg-white pl-[5px] focus:outline-none">
        {options.map((o) => <option key={o}>{o}</option>)}
      </select>
      <Arrow className="pointer-events-none absolute right-[7px]" />
    </span>
  );
}

function Ribbon() {
  const small = 'flex h-[19px] items-center gap-[3px] whitespace-nowrap';
  return (
    <div className="flex h-[103px] shrink-0 border-b border-[#dcdcdc] text-[13px]">
      <Group label="Window" width="w-[163px]">
        <BigButton icon="bigWindow" lines={['Window']} width="w-[76px]" drop />
        <div className="mt-[3px] grid grid-cols-3 content-start gap-x-3 gap-y-3 pl-[5px]">
          {layouts.map((d) => (
            <button key={d} aria-label="Window layout">
              <svg viewBox="0 0 13 13" className="size-[13px]" fill="none" stroke="#a3a3a3"><path d={d} /></svg>
            </button>
          ))}
        </div>
      </Group>

      <Group label="Zoom" width="w-[95px]">
        <div className="flex flex-col pt-2 pl-[13px]">
          <button className="flex items-center gap-[5px]"><Glyph name="zoomBox" className="size-[22px]" />Zoom</button>
          <input aria-label="Zoom factor" defaultValue="5.4044" className="mt-[14px] h-6 w-[70px] border border-[#a8a8a8] pl-1 focus:outline-none" />
        </div>
      </Group>

      <Group label="Visibility" width="w-[410px]">
        <BigButton icon="showHide" lines={['Show', 'and Hide']} width="w-[77px]" />
        <div className="flex w-[112px] shrink-0 flex-col gap-[6px] pt-[2px]">
          <Picker label="Work layer" options={['1', '2', '3']} className="h-6 w-[60px]" />
          <button className={small}><Glyph name="moveLayer" />Move to Layer</button>
          <button className={small}><Glyph name="layerSettings" />Layer Settings</button>
        </div>
        <BigButton icon="editSection" lines={['Edit', 'Section']} width="w-[52px]" />
        <BigButton icon="clipSection" lines={['Clip', 'Section']} width="w-[52px]" />
        <BigButton icon="seeThru" lines={['See-Thru', 'All']} width="w-16" />
        <MoreButton icon="showHide" width="w-[52px]" />
      </Group>

      <Group label="Visualization" width="w-[423px]">
        <BigButton icon="preferences" lines={['Preferences']} width="w-[92px]" />
        <BigButton icon="objectDisplay" lines={['Edit Object', 'Display']} width="w-16" />
        <BigButton icon="exportImage" lines={['Export', 'Image']} width="w-[54px]" />
        <div className="flex w-[167px] shrink-0 flex-col items-start gap-[5px] pt-px">
          <button disabled className={`${small} pl-[3px] text-[#c0c0c0]`}><Glyph name="capture" />Capture Studio Image</button>
          <button className={`${small} pl-[3px]`}><Glyph name="editBackground" />Edit Background</button>
          <button aria-pressed="true" className="flex h-[25px] items-center gap-[3px] border border-[#a9d3dc] bg-[#cde6eb] px-[2px] whitespace-nowrap"><Glyph name="faceEdges" />Face Edges</button>
        </div>
        <MoreButton icon="camera" width="w-[44px]" />
      </Group>

      <Group width="w-[66px]">
        <BigButton icon="sphere" lines={['True', 'Shading']} width="w-full" />
      </Group>
      <button aria-label="Ribbon options" className="mt-auto mr-[6px] mb-2 ml-auto"><Arrow /></button>
    </div>
  );
}

// 'v' is a drop-down arrow, '|' a divider, a leading '*' marks a pressed button
const barItems = [
  'grayTree', 'grayFilter', 'redFilter', 'v', 'grayMove', 'grayShare', 'dottedPoint', 'rectSelect', 'v', 'grayBlend', 'blueCube',
  '*snapAll', '*endPoint', '*midPoint', 'arcPoint', '*polePoint', '*spline', 'crossPoint', '*arcCenter', 'quadrant', '*existing', '*onCurve',
  'onFace', 'facet', 'gridPoint', '|', 'zoomBox', 'panView', 'rotateView', 'perspective', 'grayView', 'layoutRed', 'v',
  'renderStyle', 'v', 'solidCube', 'v', 'showHide', 'v', '|',
];

function SelectionBar() {
  return (
    <div className="flex h-9 shrink-0 items-center border-b border-[#8b9396] pt-px text-[13px]">
      <button className="flex w-[83px] items-center gap-1 pl-[10px]">
        <Glyph name="menu" />
        <span><u>M</u>enu</span>
        <Arrow />
      </button>
      <span className="h-7 w-px bg-[#dcdcdc]" />
      <Picker label="Type filter" options={['No Selection Filter', 'Curve', 'Face']} className="ml-3 h-6 w-[157px]" />
      <Picker label="Selection scope" options={['Entire Assembly', 'Within Work Part Only']} className="ml-[9px] h-6 w-[165px]" />
      <div className="flex items-center gap-px">
        {barItems.map((item, i) => {
          if (item === 'v') return <button key={i} aria-label="Options" className="flex w-[14px] justify-center pr-[2px]"><Arrow /></button>;
          if (item === '|') return <span key={i} className="mx-[6px] h-7 w-px bg-[#dcdcdc]" />;
          const on = item.startsWith('*');
          const name = on ? item.slice(1) : item;
          return (
            <button
              key={i}
              aria-label={name}
              aria-pressed={on}
              className={on ? 'grid h-[22px] w-6 place-items-center border border-[#a9d3dc] bg-[#cde6eb]' : 'grid h-[22px] w-6 place-items-center'}
            >
              <Glyph name={name} />
            </button>
          );
        })}
      </div>
      <button aria-label="Selection bar options" className="mt-[9px] mr-[6px] ml-auto"><Arrow /></button>
    </div>
  );
}

const resources = [
  { icon: 'gear', cls: 'mr-[3px] h-6' },
  { icon: 'assemblyNav', cls: 'mt-[14px] h-[46px] pl-[3px]' },
  { icon: 'constraintNav', cls: 'h-[39px] pl-[3px]' },
  { icon: 'partNav', cls: 'h-[46px]' },
  { icon: 'library', cls: 'h-10 pl-[3px]' },
  { icon: 'info', cls: 'mt-[10px] h-[46px] pl-[3px]' },
  { icon: 'webDoc', cls: 'mt-2 h-[46px] pl-[3px]' },
  { icon: 'clock', cls: 'mt-2 h-[46px] pl-[3px]' },
  { icon: 'palette', cls: 'h-10 pl-[3px]' },
  { icon: 'tools', cls: 'h-[42px] pl-[3px]' },
];

function ResourceBar() {
  return (
    <aside className="flex w-8 shrink-0 flex-col border-r border-[#a3a3a3] bg-[#dcdcdc]">
      {resources.map((r) =>
        r.icon === 'partNav' ? (
          <button key={r.icon} aria-label={r.icon} className={`z-10 -mr-px ml-[2px] flex shrink-0 items-center justify-center border border-r-0 border-[#a3a3a3] bg-white ${r.cls}`}>
            <Glyph name={r.icon} className="size-6" />
          </button>
        ) : (
          <button key={r.icon} aria-label={r.icon} className={`flex shrink-0 items-center justify-center ${r.cls}`}>
            <Glyph name={r.icon} className={r.icon === 'gear' ? 'size-[14px]' : 'size-6'} />
          </button>
        ),
      )}
    </aside>
  );
}

type Feature = { label: string; icon: string; on?: boolean; bold?: boolean };

const blend = (n: number): Feature => ({ label: `Edge Blend (${n})`, icon: 'edgeBlend' });

const features: Feature[] = [
  { label: 'Trim Sheet (92)', icon: 'trimSheet', on: true },
  { label: 'Spline (93)', icon: 'spline', on: true },
  { label: 'Fill Surface (94)', icon: 'fillSurface', on: true },
  { label: 'Fill Surface (95)', icon: 'fillSurface', on: true },
  { label: 'Sew (96)', icon: 'sew', on: true },
  { label: 'Edge Blend (97)', icon: 'edgeBlend', on: true },
  { label: 'Edge Blend (98)', icon: 'edgeBlend', on: true },
  { label: 'Edge Blend (99)', icon: 'edgeBlend', on: true, bold: true },
  { label: 'Pattern Geometry [Circular] (100)', icon: 'pattern' },
  { label: 'Unite (101)', icon: 'unite' },
  ...[102, 103, 104, 105, 106, 107, 108, 109, 110, 111].map(blend),
  { label: 'Sketch (112) "SKETCH_002"', icon: 'sketch' },
  { label: 'Revolve (113)', icon: 'revolve' },
  { label: 'Unite (114)', icon: 'unite' },
  blend(115),
  { label: 'Datum Plane (116)', icon: 'datumPlane' },
  { label: 'Intersection Curves (117)', icon: 'intersect' },
  { label: 'Sketch (118) "SKETCH_003"', icon: 'sketch' },
  { label: 'Extrude (119)', icon: 'extrude' },
  { label: 'Sketch (120) "SKETCH_004"', icon: 'sketch' },
  { label: 'Extrude (121)', icon: 'extrude' },
];

function FeatureRow({ feature }: { feature: Feature }) {
  const [on, setOn] = useState(!!feature.on);
  return (
    <li className="flex h-6 items-center border-b border-[#e6e6e6] pl-7 odd:bg-[#f9f9f9]">
      <span className="flex w-[11px] shrink-0 items-center self-stretch border-l border-dotted border-[#909090]">
        <span className="ml-px w-2 border-t border-dotted border-[#909090]" />
      </span>
      <label className="flex min-w-0 items-center whitespace-nowrap">
        <span className="grid w-[15px] shrink-0 place-items-center">
          <input type="checkbox" checked={on} onChange={(e) => setOn(e.target.checked)} className="col-start-1 row-start-1 size-3 appearance-none" />
          <svg viewBox="0 0 15 15" className="pointer-events-none col-start-1 row-start-1 size-[15px]" fill="none">
            {on ? (
              <>
                <path d="M1.500 2.500h11v11h-11z" fill="#fff" stroke="#111" />
                <path d="M3.500 7.500l3 3.500 5-7" stroke="#18b830" strokeWidth="2.400" />
              </>
            ) : (
              <path d="M7.500.5L14.500 7.500 7.500 14.500.5 7.500z" stroke="#111" strokeDasharray="2 1.300" strokeWidth="1.400" />
            )}
          </svg>
        </span>
        <Glyph name={feature.icon} />
        <span className={feature.bold ? 'pl-[3px] font-bold' : 'pl-[3px]'}>{feature.label}</span>
      </label>
    </li>
  );
}

function Chevron({ d }: { d: string }) {
  return (
    <svg viewBox="0 0 12 12" className="size-3" fill="none" stroke="#555" strokeWidth="2"><path d={d} /></svg>
  );
}

function PartNavigator() {
  return (
    <section className="flex w-[327px] shrink-0 flex-col border-r border-[#8b9396] pr-[9px] pb-[6px] pl-[6px]">
      <div className="flex h-[30px] shrink-0 items-center justify-between pr-[7px] pl-1">
        <h2 className="text-[14px]">Part Navigator</h2>
        <button aria-label="Undock" className="h-[13px] w-[14px] border border-t-2 border-black" />
      </div>
      <div className="flex min-h-0 flex-1 flex-col border-2 border-[#dcdcdc]">
        <div className="flex h-[25px] shrink-0 border-b border-[#c8c8c8] bg-[#efefef]">
          <button className="flex flex-1 items-center gap-[18px] pl-[6px] text-[14px]">
            Name
            <svg viewBox="0 0 11 6" className="h-[6px] w-[11px]"><path d="M0 6h11L5.500 0z" fill="#111" /></svg>
          </button>
          <span className="w-[21px] bg-[#bfbfbf]" />
        </div>
        <div className="flex min-h-0 flex-1">
          <ul className="min-w-0 flex-1 overflow-hidden text-[14px] text-[#a0a0a0]">
            {features.map((f) => <FeatureRow key={f.label} feature={f} />)}
          </ul>
          <div className="flex w-5 shrink-0 flex-col items-center bg-[#f0f0f0]">
            <button aria-label="Scroll up" className="grid h-5 place-items-center"><Chevron d="M1 9l5-5 5 5" /></button>
            <div className="flex w-full flex-1 flex-col">
              <span className="flex-[443]" />
              <span className="flex-[132] bg-[#cdcdcd]" />
              <span className="flex-[100]" />
            </div>
            <button aria-label="Scroll down" className="grid h-[21px] place-items-center"><Chevron d="M1 3l5 5 5-5" /></button>
          </div>
        </div>
        <div className="flex h-[19px] shrink-0 items-center bg-[#f0f0f0] pr-[21px]">
          <button aria-label="Scroll left" className="grid w-[21px] place-items-center"><Chevron d="M8 1L3 6l5 5" /></button>
          <div className="flex h-full flex-1">
            <span className="w-28 bg-[#cdcdcd]" />
          </div>
          <button aria-label="Scroll right" className="grid w-6 place-items-center"><Chevron d="M4 1l5 5-5 5" /></button>
        </div>
      </div>
      <div className="mt-px h-[5px] shrink-0 border border-[#a8a8a8] bg-[#dcdcdc]" />
    </section>
  );
}

function Turbine() {
  const edge = '#33331a';
  return (
    <svg viewBox="360 225 1559 781" className="absolute inset-0 size-full" role="img" aria-label="Turbine model">
      <defs>
        <linearGradient id="shaft" x1="998" x2="1242" y1="0" y2="0" gradientUnits="userSpaceOnUse">
          <stop offset="0" stopColor="#8d8d23" />
          <stop offset=".18" stopColor="#82821f" />
          <stop offset=".34" stopColor="#6e6e1b" />
          <stop offset=".5" stopColor="#70701b" />
          <stop offset=".62" stopColor="#7b7b1e" />
          <stop offset=".78" stopColor="#929224" />
          <stop offset="1" stopColor="#a6a629" />
        </linearGradient>
        <linearGradient id="flare" x1="955" x2="1285" y1="0" y2="0" gradientUnits="userSpaceOnUse">
          <stop offset="0" stopColor="#b4b42d" />
          <stop offset=".1" stopColor="#a4a429" />
          <stop offset=".25" stopColor="#919124" />
          <stop offset=".4" stopColor="#7b7b1f" />
          <stop offset=".55" stopColor="#84841f" />
          <stop offset=".75" stopColor="#a9a92a" />
          <stop offset=".9" stopColor="#c2c230" />
          <stop offset="1" stopColor="#d8d836" />
        </linearGradient>
        <linearGradient id="bottomFade" x1="0" x2="0" y1="592" y2="638" gradientUnits="userSpaceOnUse">
          <stop offset="0" stopColor="#fff" />
          <stop offset="1" stopColor="#000" />
        </linearGradient>
        <linearGradient id="topFade" x1="0" x2="0" y1="545" y2="612" gradientUnits="userSpaceOnUse">
          <stop offset="0" stopColor="#000" />
          <stop offset="1" stopColor="#fff" />
        </linearGradient>
        <linearGradient id="rim" x1="773" x2="1466" y1="0" y2="0" gradientUnits="userSpaceOnUse">
          <stop offset="0" stopColor="#a8a82a" />
          <stop offset=".2" stopColor="#e8e83a" />
          <stop offset=".7" stopColor="#ffff6a" />
          <stop offset="1" stopColor="#b0b02c" />
        </linearGradient>
        <mask id="flareMask" maskUnits="userSpaceOnUse" x="700" y="400" width="840" height="600">
          <rect x="700" y="400" width="840" height="600" fill="url(#bottomFade)" />
        </mask>
        <mask id="shadeMask" maskUnits="userSpaceOnUse" x="700" y="400" width="840" height="600">
          <rect x="700" y="400" width="840" height="600" fill="url(#topFade)" />
        </mask>
        <clipPath id="collarClip">
          <path d="M998 378A122 70 0 011242 378V381A122 70.500 0 01998 381z" />
        </clipPath>
        <filter id="blurL" x="-50%" y="-50%" width="200%" height="200%"><feGaussianBlur stdDeviation="22" /></filter>
        <filter id="blurM" x="-50%" y="-50%" width="200%" height="200%"><feGaussianBlur stdDeviation="18" /></filter>
        <filter id="blurS" x="-50%" y="-50%" width="200%" height="200%"><feGaussianBlur stdDeviation="3" /></filter>
        <filter id="blurEdge" x="-20%" y="-20%" width="140%" height="140%"><feGaussianBlur stdDeviation="6" /></filter>
      </defs>

      {/* hub under the disc */}
      <path d="M998 890L1000 903 1011 921 1031 935 1055 946 1082 953 1113 956 1142 955 1169 951 1195 942 1216 930 1232 915 1242 890z" fill="url(#shaft)" stroke={edge} />
      <path d="M1008 890L1012 902 1031 915 1055 927 1078 934 1111 937 1142 936 1169 932 1195 923 1215 912 1230 890z" fill="#ffff40" stroke={edge} />
      <path d="M1035 895L1042 907 1058 915 1079 923 1104 926 1135 926 1159 923 1181 917 1202 900z" fill="url(#shaft)" stroke={edge} />
      <path d="M1050 908L1079 917 1111 921 1138 920 1167 915 1191 908" fill="none" stroke={edge} />

      {/* disc: underside, rim, face */}
      <ellipse cx="1119.500" cy="711" rx="345.500" ry="201" fill="#7e7e1f" />
      <ellipse cx="1119.500" cy="708" rx="346.500" ry="200" fill="url(#rim)" stroke={edge} strokeWidth="1.200" />
      <ellipse cx="1119.500" cy="705.500" rx="343" ry="197.500" fill="#ffff46" filter="url(#blurS)" />
      <ellipse cx="1119.500" cy="704.500" rx="339.500" ry="195.500" fill="#ffff40" stroke={edge} strokeWidth=".8" />

      {/* soft shading where the shaft flares into the disc */}
      <g mask="url(#shadeMask)">
        <path d="M918 540C865 620 870 715 965 722S1060 775 1105 772 1150 735 1225 708 1350 650 1290 540z" fill="#e0e038" filter="url(#blurL)" />
        <path d="M945 540C905 620 915 695 1000 706S1110 735 1155 708 1290 670 1272 540z" fill="#cccc33" filter="url(#blurM)" />
        <path d="M962 530C930 630 950 675 1020 688S1130 695 1165 676 1262 630 1245 530z" fill="#aeae2b" filter="url(#blurM)" />
        <path d="M990 520C970 620 1000 660 1065 664S1160 640 1195 520z" fill="#8c8c22" filter="url(#blurM)" />
      </g>
      <ellipse cx="1018" cy="758" rx="34" ry="26" fill="#ffff66" filter="url(#blurL)" />
      <ellipse cx="1230" cy="758" rx="42" ry="38" fill="#ffff86" filter="url(#blurL)" />
      <g mask="url(#flareMask)">
        <path d="M998 560C985 580 968 596 958 612L950 680H1300L1284 618C1268 596 1252 580 1242 560z" fill="url(#flare)" filter="url(#blurEdge)" />
      </g>
      <path d="M998 522C998 550 990 568 976 584Q1119 640 1262 584C1250 568 1242 550 1242 522z" fill="url(#flare)" />
      <ellipse cx="1119.500" cy="704" rx="330" ry="190" fill="none" stroke={edge} strokeWidth=".8" />

      {/* shaft */}
      <path d="M998 381V522A122 70.500 0 001242 522V381z" fill="url(#shaft)" />
      <path d="M998 522A122 70.500 0 001242 522" fill="none" stroke={edge} strokeWidth=".9" />
      <g clipPath="url(#collarClip)">
        <path d="M990 300h260v160H990z" fill="#ffff46" />
        <path d="M998 366v15A122 70.500 0 001242 381v-15" fill="none" stroke="#8a8a22" strokeWidth="7" filter="url(#blurS)" />
      </g>
      <path d="M998 381A122 70.500 0 001242 381" fill="none" stroke={edge} strokeWidth="1.200" />
      <ellipse cx="1119.500" cy="374.500" rx="113" ry="65" fill="#ffff40" stroke={edge} strokeWidth=".9" />

      {/* view triad */}
      <path d="M422 906h24l1 35h-25z" fill="#d9d9d9" stroke="#9b9b9b" strokeWidth=".8" />
      <path d="M422 920.500h25M422 926.500h25" stroke="#a0a0a0" />
      <path d="M420 940l-1-26M417 908l3 7" stroke="#3aa648" strokeWidth="1.500" />
      <path d="M422 941h36" stroke="#d03030" strokeWidth="2" />
      <path d="M454 937.500l11 3.500-11 3.500z" fill="#d03030" />
      <path d="M422 940v-26" stroke="#0a2cb0" strokeWidth="3" />
      <path d="M418.500 917l3.500-11 3.500 11z" fill="#0a2cb0" />
      <circle cx="422" cy="941.500" r="4" fill="#b9b9b9" stroke="#8a8a8a" strokeWidth=".6" />
      <text x="419" y="907" fontSize="12" fill="#1a50f0">Z</text>
      <text x="467" y="946" fontSize="13" fill="#d84040">X</text>
    </svg>
  );
}

function Viewport() {
  return (
    <main className="flex min-w-0 flex-1 flex-col border-b border-[#c4c4c4]">
      <div className="flex h-[25px] shrink-0 border-b-2 border-[#52a0b8]">
        <div className="flex items-center gap-[5px] bg-[#52a0b8] pr-[6px] pl-[6px] text-[14px] text-white">
          <Glyph name="partFile" className="size-[15px]" />
          <span>Turbine.prt</span>
          <Glyph name="modified" className="size-[11px]" />
          <button aria-label="Close Turbine.prt">
            <svg viewBox="0 0 10 10" className="size-[9px]" stroke="#fff" strokeWidth="2.400"><path d="M1 1l8 8M9 1L1 9" /></svg>
          </button>
        </div>
      </div>
      <div className="relative min-h-0 flex-1">
        <Turbine />
      </div>
    </main>
  );
}

export default function App() {
  return (
    <div className="flex h-screen flex-col overflow-hidden bg-white font-['Open_Sans','Noto_Sans',sans-serif] text-[#1e1e1e]">
      <GlyphDefs />
      <TitleBar />
      <TabBar />
      <Ribbon />
      <SelectionBar />
      <div className="flex min-h-0 flex-1">
        <ResourceBar />
        <PartNavigator />
        <Viewport />
      </div>
      <footer className="flex h-[23px] shrink-0 items-center justify-between border-t border-[#a3a3a3] pr-[54px] pl-[3px]">
        <p className="text-[14px] leading-5 font-bold text-black">Select objects and use MB3, or double-click an object</p>
        <div className="flex gap-1">
          <button aria-label="Finish flag"><Glyph name="flag" className="size-[15px]" /></button>
          <button aria-label="Full screen"><Glyph name="fullScreen" className="size-4" /></button>
        </div>
      </footer>
    </div>
  );
}
